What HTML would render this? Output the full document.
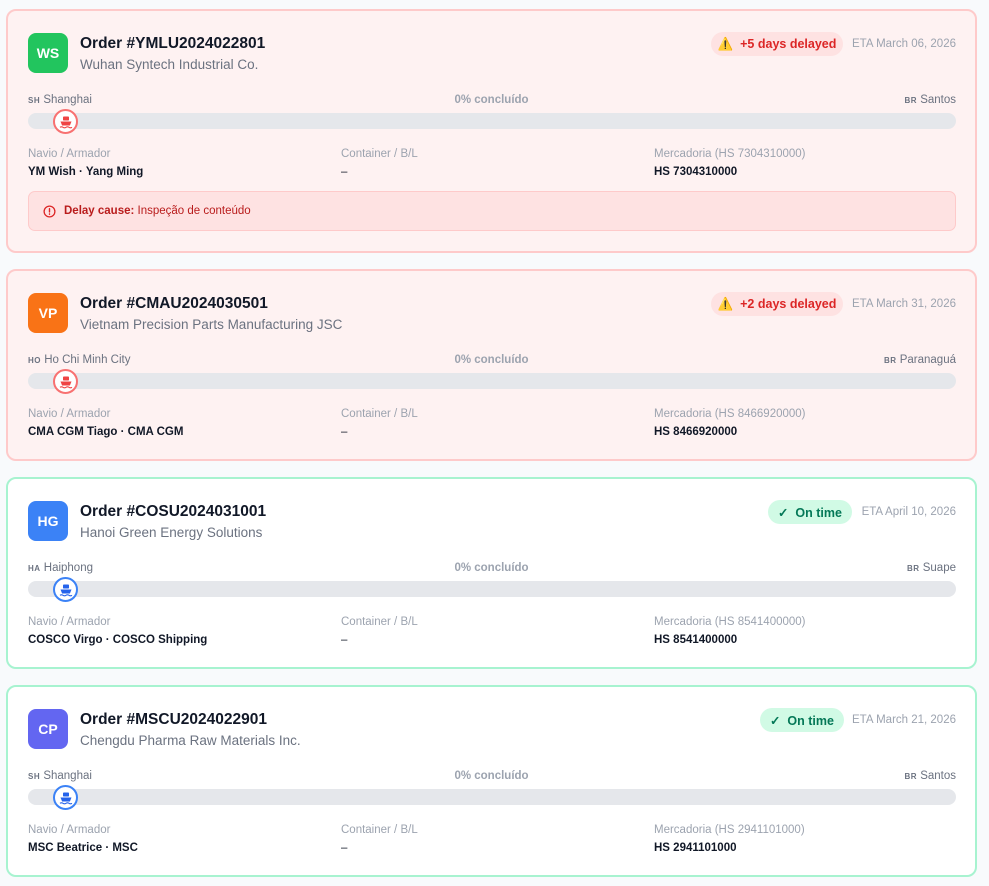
<!DOCTYPE html>
<html><head><meta charset="utf-8"><style>
*{box-sizing:border-box;margin:0;padding:0}
body{width:989px;height:886px;background:#f8fafc;font-family:"Liberation Sans",sans-serif;position:relative;overflow:hidden}
.card{position:absolute;left:6px;width:971px;border:2px solid;border-radius:10px}
.red{background:#fef2f2;border-color:#fecaca}
.grn{background:#fff;border-color:#a7f3d0}
.av{position:absolute;left:20px;top:22px;width:40px;height:40px;border-radius:8px;color:#fff;font-weight:700;font-size:14px;display:flex;align-items:center;justify-content:center}
.t{position:absolute;left:72px;top:24px;font-size:15.5px;font-weight:700;color:#111827}
.s{position:absolute;left:72px;top:46px;font-size:13.5px;color:#6b7280}
.badge{position:absolute;top:21px;height:24px;border-radius:12px;font-size:12.5px;font-weight:700;display:flex;align-items:center;justify-content:center;white-space:nowrap}
.bd{background:#fee2e2;color:#dc2626}
.bg{background:#d1fae5;color:#047857}
.eta{position:absolute;right:19px;top:27px;font-size:11.5px;color:#9ca3af}
.pl{position:absolute;top:83px;font-size:11.5px;color:#6b7280}
.pl b{font-size:8px;color:#6b7280;letter-spacing:.5px}
.pc{position:absolute;top:83px;left:0;width:100%;text-align:center;font-size:11.5px;font-weight:700;color:#9ca3af}
.bar{position:absolute;left:20px;top:102px;width:928px;height:16px;background:#e5e7eb;border-radius:8px}
.ship{position:absolute;left:45px;top:98px;width:25px;height:25px;border-radius:50%;background:#fff;border:2px solid;display:flex;align-items:center;justify-content:center}
.lb{position:absolute;top:137px;font-size:11.5px;color:#9ca3af}
.vl{position:absolute;top:155px;font-size:11.5px;font-weight:700;color:#111827}
.delay{position:absolute;left:20px;top:180px;width:928px;height:40px;border:1px solid #fecaca;background:#fee2e2;border-radius:7px;font-size:11.5px;color:#b91c1c;display:flex;align-items:center;padding-left:14px}
</style></head><body>

<div class="card red" style="top:9px;height:244px">
<div class="av" style="background:#22c55e">WS</div>
<div class="t">Order #YMLU2024022801</div>
<div class="s">Wuhan Syntech Industrial Co.</div>
<div class="badge bd" style="right:132px;width:132px">⚠️&nbsp;&nbsp;+5 days delayed</div>
<div class="eta">ETA March 06, 2026</div>
<div class="pl" style="left:20px"><b>SH</b> Shanghai</div>
<div class="pc">0% concluído</div>
<div class="pl" style="right:19px"><b>BR</b> Santos</div>
<div class="bar"></div>
<div class="ship" style="border-color:#f87171"><svg width="14" height="14" viewBox="0 0 14 14"><rect x="4" y="1.5" width="6" height="4" rx=".8" fill="#ef4444"/><path d="M1.5 6.5h11l-1.6 4h-7.8z" fill="#ef4444"/><path d="M1 12.3q1.5-1 3 0t3 0 3 0 3 0" stroke="#ef4444" stroke-width="1.1" fill="none"/></svg></div>
<div class="lb" style="left:20px">Navio / Armador</div><div class="vl" style="left:20px">YM Wish · Yang Ming</div>
<div class="lb" style="left:333px">Container / B/L</div><div class="vl" style="left:333px;font-weight:400">–</div>
<div class="lb" style="left:646px">Mercadoria (HS 7304310000)</div><div class="vl" style="left:646px">HS 7304310000</div>
<div class="delay"><svg width="13" height="13" viewBox="0 0 14 14" style="margin-right:8px"><circle cx="7" cy="7" r="5.8" fill="none" stroke="#dc2626" stroke-width="1.4"/><path d="M7 4v3.5M7 9.6v.4" stroke="#dc2626" stroke-width="1.5" stroke-linecap="round"/></svg><b>Delay cause:</b>&nbsp;Inspeção de conteúdo</div>
</div>

<div class="card red" style="top:269px;height:192px">
<div class="av" style="background:#f97316">VP</div>
<div class="t">Order #CMAU2024030501</div>
<div class="s">Vietnam Precision Parts Manufacturing JSC</div>
<div class="badge bd" style="right:132px;width:132px">⚠️&nbsp;&nbsp;+2 days delayed</div>
<div class="eta">ETA March 31, 2026</div>
<div class="pl" style="left:20px"><b>HO</b> Ho Chi Minh City</div>
<div class="pc">0% concluído</div>
<div class="pl" style="right:19px"><b>BR</b> Paranaguá</div>
<div class="bar"></div>
<div class="ship" style="border-color:#f87171"><svg width="14" height="14" viewBox="0 0 14 14"><rect x="4" y="1.5" width="6" height="4" rx=".8" fill="#ef4444"/><path d="M1.5 6.5h11l-1.6 4h-7.8z" fill="#ef4444"/><path d="M1 12.3q1.5-1 3 0t3 0 3 0 3 0" stroke="#ef4444" stroke-width="1.1" fill="none"/></svg></div>
<div class="lb" style="left:20px">Navio / Armador</div><div class="vl" style="left:20px">CMA CGM Tiago · CMA CGM</div>
<div class="lb" style="left:333px">Container / B/L</div><div class="vl" style="left:333px;font-weight:400">–</div>
<div class="lb" style="left:646px">Mercadoria (HS 8466920000)</div><div class="vl" style="left:646px">HS 8466920000</div>
</div>

<div class="card grn" style="top:477px;height:192px">
<div class="av" style="background:#3b82f6">HG</div>
<div class="t">Order #COSU2024031001</div>
<div class="s">Hanoi Green Energy Solutions</div>
<div class="badge bg" style="right:123px;width:84px">✓&nbsp;&nbsp;On time</div>
<div class="eta">ETA April 10, 2026</div>
<div class="pl" style="left:20px"><b>HA</b> Haiphong</div>
<div class="pc">0% concluído</div>
<div class="pl" style="right:19px"><b>BR</b> Suape</div>
<div class="bar"></div>
<div class="ship" style="border-color:#3b82f6"><svg width="14" height="14" viewBox="0 0 14 14"><rect x="4" y="1.5" width="6" height="4" rx=".8" fill="#2563eb"/><path d="M1.5 6.5h11l-1.6 4h-7.8z" fill="#2563eb"/><path d="M1 12.3q1.5-1 3 0t3 0 3 0 3 0" stroke="#2563eb" stroke-width="1.1" fill="none"/></svg></div>
<div class="lb" style="left:20px">Navio / Armador</div><div class="vl" style="left:20px">COSCO Virgo · COSCO Shipping</div>
<div class="lb" style="left:333px">Container / B/L</div><div class="vl" style="left:333px;font-weight:400">–</div>
<div class="lb" style="left:646px">Mercadoria (HS 8541400000)</div><div class="vl" style="left:646px">HS 8541400000</div>
</div>

<div class="card grn" style="top:685px;height:192px">
<div class="av" style="background:#6366f1">CP</div>
<div class="t">Order #MSCU2024022901</div>
<div class="s">Chengdu Pharma Raw Materials Inc.</div>
<div class="badge bg" style="right:131px;width:84px">✓&nbsp;&nbsp;On time</div>
<div class="eta">ETA March 21, 2026</div>
<div class="pl" style="left:20px"><b>SH</b> Shanghai</div>
<div class="pc">0% concluído</div>
<div class="pl" style="right:19px"><b>BR</b> Santos</div>
<div class="bar"></div>
<div class="ship" style="border-color:#3b82f6"><svg width="14" height="14" viewBox="0 0 14 14"><rect x="4" y="1.5" width="6" height="4" rx=".8" fill="#2563eb"/><path d="M1.5 6.5h11l-1.6 4h-7.8z" fill="#2563eb"/><path d="M1 12.3q1.5-1 3 0t3 0 3 0 3 0" stroke="#2563eb" stroke-width="1.1" fill="none"/></svg></div>
<div class="lb" style="left:20px">Navio / Armador</div><div class="vl" style="left:20px">MSC Beatrice · MSC</div>
<div class="lb" style="left:333px">Container / B/L</div><div class="vl" style="left:333px;font-weight:400">–</div>
<div class="lb" style="left:646px">Mercadoria (HS 2941101000)</div><div class="vl" style="left:646px">HS 2941101000</div>
</div>

</body></html>
